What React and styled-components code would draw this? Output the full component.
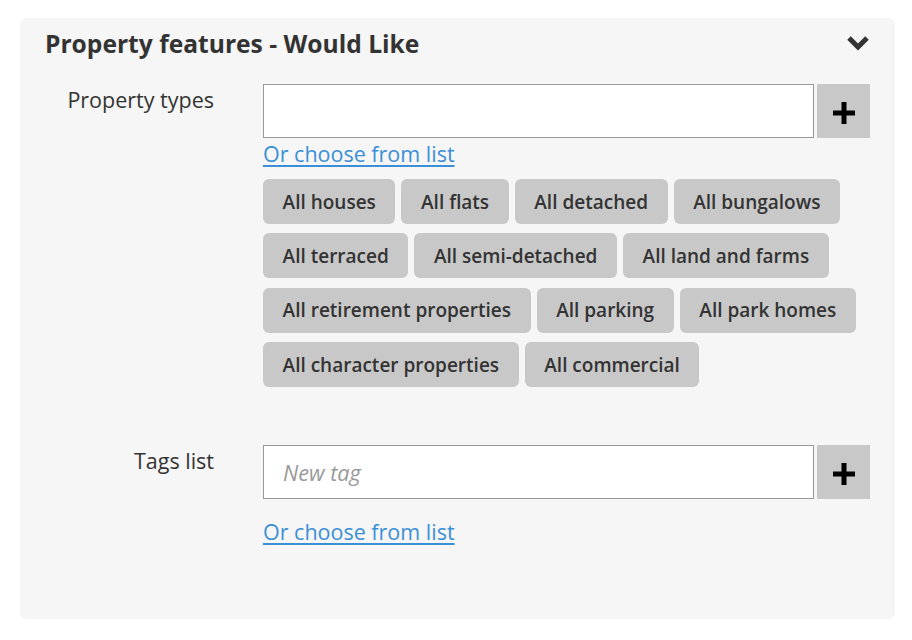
import React from "react";
import styled, { createGlobalStyle } from "styled-components";

const GlobalStyle = createGlobalStyle`
  body {
    margin: 0;
    background: #fff;
    font-family: "Open Sans", "Liberation Sans", sans-serif;
    color: #333;
  }
`;

const propertyTypes = [
  "All houses",
  "All flats",
  "All detached",
  "All bungalows",
  "All terraced",
  "All semi-detached",
  "All land and farms",
  "All retirement properties",
  "All parking",
  "All park homes",
  "All character properties",
  "All commercial",
];

const Page = styled.div`
  padding: 18px 18px 21px 20px;
`;

const Panel = styled.section`
  background: #f6f6f6;
  border-radius: 6px;
  border-right: 1px solid #ececec;
  height: 601px;
  box-sizing: border-box;
  padding: 0 23px 0 25px;
`;

const Header = styled.div`
  display: flex;
  align-items: center;
  justify-content: space-between;
  height: 50px;
`;

const Title = styled.h2`
  margin: 0;
  font-size: 24.6px;
  font-weight: 700;
  color: #333;
`;

const Chevron = styled.svg`
  width: 24px;
  height: 16px;
`;

const Row = styled.div`
  display: grid;
  grid-template-columns: 169px 1fr;
  column-gap: 49px;
  margin-top: ${(p) => p.$top || 0}px;
`;

const Label = styled.label`
  text-align: right;
  font-size: 21.5px;
  color: #333;
  padding-top: 1px;
  line-height: 29px;
`;

const InputGroup = styled.div`
  display: flex;
  gap: 3px;
`;

const TextInput = styled.input`
  flex: 1;
  min-width: 0;
  height: 54px;
  box-sizing: border-box;
  border: 1px solid #999;
  background: #fff;
  font-family: "Open Sans", "Liberation Sans", sans-serif;
  font-size: 21.7px;
  padding: 0 19px;
  outline: none;

  &::placeholder {
    color: #999;
    font-style: italic;
  }
`;

const AddButton = styled.button`
  width: 53px;
  height: 54px;
  border: none;
  background: #c8c8c8;
  display: flex;
  align-items: center;
  justify-content: center;
  padding: 0;
  padding-top: 4px;
`;

const ListLink = styled.a`
  display: inline-block;
  color: #3b8fd6;
  font-size: 21.5px;
  line-height: 28px;
  text-decoration: underline;
  text-underline-offset: 3px;
  margin-top: ${(p) => p.$top || 2}px;
`;

const Chips = styled.div`
  display: flex;
  flex-wrap: wrap;
  column-gap: 6px;
  row-gap: 9.4px;
  margin-top: 11px;
`;

const Chip = styled.button`
  font-family: "Open Sans", "Liberation Sans", sans-serif;
  font-size: 19px;
  font-weight: 600;
  color: #333;
  background: #c8c8c8;
  border: none;
  border-radius: 6px;
  height: 45px;
  padding: 0 19.6px;
`;

const PlusIcon = () => (
  <svg width="24" height="24" viewBox="0 0 24 24">
    <path d="M12 1v22M1 12h22" stroke="#000" strokeWidth="5" />
  </svg>
);

export default function App() {
  return (
    <>
      <GlobalStyle />
      <Page>
        <Panel>
          <Header>
            <Title>Property features - Would Like</Title>
            <Chevron viewBox="0 0 24 16">
              <path
                d="M3 3l9 9 9-9"
                fill="none"
                stroke="#333"
                strokeWidth="5"
                strokeLinejoin="miter"
              />
            </Chevron>
          </Header>
          <Row $top={16}>
            <Label>Property types</Label>
            <div>
              <InputGroup>
                <TextInput />
                <AddButton>
                  <PlusIcon />
                </AddButton>
              </InputGroup>
              <ListLink href="#">Or choose from list</ListLink>
              <Chips>
                {propertyTypes.map((t) => (
                  <Chip key={t}>{t}</Chip>
                ))}
              </Chips>
            </div>
          </Row>
          <Row $top={58}>
            <Label>Tags list</Label>
            <div>
              <InputGroup>
                <TextInput placeholder="New tag" />
                <AddButton>
                  <PlusIcon />
                </AddButton>
              </InputGroup>
              <ListLink href="#" $top={19}>
                Or choose from list
              </ListLink>
            </div>
          </Row>
        </Panel>
      </Page>
    </>
  );
}
